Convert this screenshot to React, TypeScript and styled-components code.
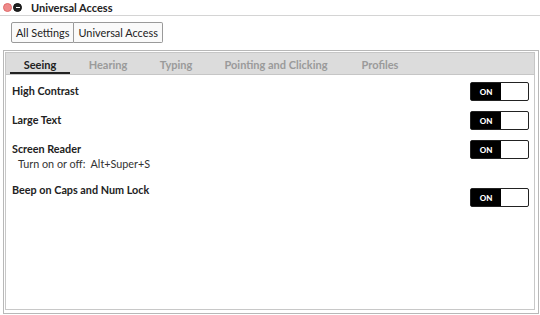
import React from "react";
import styled, { createGlobalStyle } from "styled-components";

const Global = createGlobalStyle`
  html, body { margin: 0; padding: 0; background: #ffffff; }
  body { width: 540px; height: 315px; overflow: hidden; font-family: Lato, "Open Sans", sans-serif; color: #3c3c3c; }
`;

const Window = styled.div`
  width: 540px;
  height: 315px;
  display: flex;
  flex-direction: column;
  background: #ffffff;
`;

const TitleBar = styled.div`
  height: 15px;
  display: flex;
  align-items: center;
  padding: 0 0 0 3px;
  border-bottom: 1px solid #d4d4d4;
  gap: 1px;
`;

const WinButton = styled.span<{ $kind: "close" | "min" }>`
  width: 7px;
  height: 7px;
  border-radius: 50%;
  background: ${(p) => (p.$kind === "close" ? "#ee8a8a" : "#222")};
  border: 1px solid ${(p) => (p.$kind === "close" ? "#e06a6a" : "#111")};
  display: flex;
  align-items: center;
  justify-content: center;
  &::after {
    content: "";
    width: ${(p) => (p.$kind === "close" ? "0" : "4px")};
    height: 1px;
    background: #fff;
  }
`;

const Title = styled.div`
  margin-left: 8px;
  font-weight: 700;
  font-size: 11px;
  color: #222;
`;

const Crumbs = styled.div`
  display: flex;
  padding: 6px 0 0 11px;
  height: 21px;
`;

const Crumb = styled.div<{ $first?: boolean }>`
  border: 1px solid #9a9a9a;
  border-left-width: ${(p) => (p.$first ? "1px" : "0")};
  border-radius: ${(p) => (p.$first ? "2px 0 0 2px" : "0 2px 2px 0")};
  padding: 0 4px;
  display: flex;
  align-items: center;
  font-size: 10.9px;
  color: #222;
  background: #fafafa;
`;

const Frame = styled.div`
  margin: 7px 1px 1px 3px;
  flex: 1;
  border: 1px solid #b8b8b8;
  padding: 1px 3px 3px 1px;
  display: flex;
  flex-direction: column;
`;

const Inner = styled.div`
  flex: 1;
  border: 1px solid #c8c8c8;
  border-top: none;
  display: flex;
  flex-direction: column;
`;

const TabBar = styled.div`
  height: 21px;
  background: #dcdcdc;
  border: 1px solid #c6c6c6;
  display: flex;
  align-items: stretch;
  padding-left: 4px;
`;

const Tab = styled.div<{ $active?: boolean; $w: number }>`
  width: ${(p) => p.$w}px;
  display: flex;
  align-items: center;
  justify-content: center;
  padding-top: 1px;
  font-size: 11px;
  font-weight: 700;
  color: ${(p) => (p.$active ? "#222" : "#9a9a9a")};
  box-shadow: ${(p) => (p.$active ? "inset 0 -2px 0 #222" : "none")};
`;

const Rows = styled.div`
  display: flex;
  flex-direction: column;
  padding: 8px 5px 0 6px;
`;

const Row = styled.div<{ $h: number }>`
  height: ${(p) => p.$h}px;
  display: flex;
  justify-content: space-between;
  align-items: flex-start;
`;

const Labels = styled.div`
  display: flex;
  flex-direction: column;
`;

const Label = styled.div`
  font-size: 10.8px;
  font-weight: 700;
  color: #222;
  line-height: 16px;
`;

const Sub = styled.div`
  font-size: 10.8px;
  color: #333;
  padding-left: 6px;
  line-height: 14px;
  white-space: pre;
`;

const Switch = styled.div<{ $drop: number }>`
  width: 57px;
  height: 17px;
  border: 1px solid #222;
  border-radius: 2px;
  display: flex;
  margin-top: ${(p) => p.$drop}px;
  background: #fff;
`;

const SwitchOn = styled.div`
  width: 30px;
  background: #000;
  color: #fff;
  font-size: 8px;
  font-weight: 900;
  display: flex;
  align-items: center;
  justify-content: center;
`;

const settings = [
  { label: "High Contrast", h: 29, drop: -1 },
  { label: "Large Text", h: 29, drop: -1 },
  { label: "Screen Reader", sub: "Turn on or off:  Alt+Super+S", h: 41, drop: -1 },
  { label: "Beep on Caps and Num Lock", h: 29, drop: 6 },
];

const tabs = [
  { name: "Seeing", w: 60, active: true },
  { name: "Hearing", w: 76 },
  { name: "Typing", w: 60 },
  { name: "Pointing and Clicking", w: 140 },
  { name: "Profiles", w: 68 },
];

export default function App() {
  return (
    <>
      <Global />
      <Window>
        <TitleBar>
          <WinButton $kind="close" />
          <WinButton $kind="min" />
          <Title>Universal Access</Title>
        </TitleBar>
        <Crumbs>
          <Crumb $first>All Settings</Crumb>
          <Crumb>Universal Access</Crumb>
        </Crumbs>
        <Frame>
          <TabBar>
            {tabs.map((t) => (
              <Tab key={t.name} $active={t.active} $w={t.w}>
                {t.name}
              </Tab>
            ))}
          </TabBar>
          <Inner>
            <Rows>
              {settings.map((s) => (
                <Row key={s.label} $h={s.h}>
                  <Labels>
                    <Label>{s.label}</Label>
                    {s.sub && <Sub>{s.sub}</Sub>}
                  </Labels>
                  <Switch $drop={s.drop}>
                    <SwitchOn>ON</SwitchOn>
                  </Switch>
                </Row>
              ))}
            </Rows>
          </Inner>
        </Frame>
      </Window>
    </>
  );
}
